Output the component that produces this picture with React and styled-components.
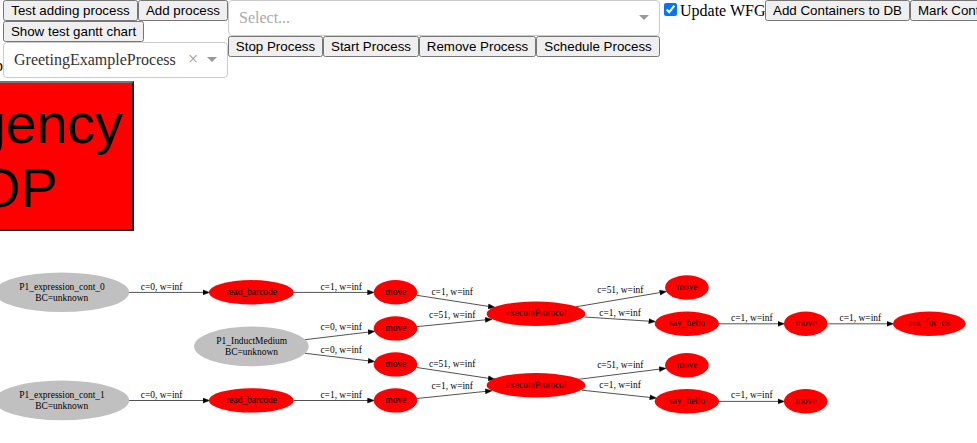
import React from "react";
import styled, { createGlobalStyle } from "styled-components";

const Global = createGlobalStyle`
  body {
    margin: 0;
    background: #fff;
    overflow: hidden;
    font: 16px "Liberation Serif", serif;
    color: #000;
  }
`;

const Page = styled.main`
  width: 977px;
  height: 443px;
  overflow: hidden;
`;

const Toolbar = styled.header`
  display: flex;
  align-items: flex-start;
  height: 81px;
`;

const PromptSlot = styled.div`
  display: flex;
  justify-content: flex-end;
  flex: none;
  width: 3px;
  height: 81px;
  padding-top: 57px;
  box-sizing: border-box;
  overflow: hidden;
  line-height: 18px;
`;

const ProcessColumn = styled.div`
  flex: none;
  width: 225px;
`;

const ScheduleColumn = styled.div`
  flex: none;
  width: 432px;
`;

const ButtonRow = styled.div`
  display: flex;
  flex-wrap: wrap;
`;

const Button = styled.button`
  flex: none;
  width: ${(p) => p.$w}px;
  height: 21px;
  margin: 0;
  padding: 0;
  border: 1px solid #767676;
  border-radius: 2.5px;
  background: #efefef;
  color: #000;
  font: 13.333px "Liberation Sans", Arial, sans-serif;
  line-height: 19px;
  text-align: center;
  white-space: nowrap;
`;

const Select = styled.div`
  display: flex;
  align-items: center;
  box-sizing: border-box;
  height: 36px;
  padding: 0 10px;
  border: 1px solid #ccc;
  border-radius: 4px;
  background: #fff;
`;

const SelectValue = styled.span`
  flex: 1;
  line-height: 34px;
  color: ${(p) => (p.$empty ? "#aaa" : "#333")};
`;

const Clear = styled.span`
  width: 17px;
  margin-right: 5.5px;
  color: #999;
  font-size: 18px;
  line-height: 30px;
  text-align: center;
  transform: translateY(-1px);
`;

const Caret = styled.span`
  margin-top: -1px;
  border: 5px solid transparent;
  border-top-color: #999;
  border-bottom-width: 0;
`;

const UpdateToggle = styled.label`
  display: flex;
  flex: none;
  width: 105px;
  line-height: 20px;
  white-space: nowrap;
`;

const UpdateText = styled.span`
  padding-top: 1px;
`;

const Checkbox = styled.input`
  width: 13px;
  height: 13px;
  margin: 3px 3px 0 4px;
`;

const StopButton = styled.button`
  display: flex;
  justify-content: flex-end;
  box-sizing: border-box;
  width: 134px;
  height: 150px;
  padding: 9px 9px 0 0;
  border: 2px solid;
  border-color: #767676 #212121 #212121 #767676;
  border-left: 0;
  background: #f00;
  color: #000;
  font: 55.5px/64px "Liberation Sans", Arial, sans-serif;
  overflow: hidden;
`;

const StopText = styled.span`
  flex: none;
  text-align: center;
`;

const Graph = styled.svg`
  display: block;
  width: 977px;
  height: 212px;
`;

const GraphText = styled.text`
  font: 9.45px "Liberation Serif", serif;
  text-anchor: middle;
`;

const nodes = [
  [61.7, 292.3, 67.5, 19.8, "P1_expression_cont_0", "BC=unknown"],
  [251.3, 292.3, 42.5, 12.2, "read_barcode"],
  [395.5, 292.3, 21.8, 12.2, "move"],
  [251.4, 346.4, 57.3, 19.8, "P1_InductMedium", "BC=unknown"],
  [395.5, 328.4, 21.8, 12.2, "move"],
  [395.5, 364.4, 21.8, 12.2, "move"],
  [61.7, 400.4, 67.5, 19.8, "P1_expression_cont_1", "BC=unknown"],
  [251.3, 400.4, 42.5, 12.2, "read_barcode"],
  [395.5, 400.4, 21.8, 12.2, "move"],
  [536, 313.7, 49.3, 12.2, "executeProtocol"],
  [536, 385.2, 49.3, 12.2, "executeProtocol"],
  [686.9, 287.5, 21.8, 12.2, "move"],
  [686.9, 323.7, 32.2, 12.2, "say_hello"],
  [805.7, 323.7, 21.8, 12.2, "move"],
  [929.3, 323.7, 36.4, 12.2, "ask_for_ok"],
  [686.9, 365.2, 21.8, 12.2, "move"],
  [686.9, 401.3, 32.2, 12.2, "say_hello"],
  [805.7, 401.3, 21.8, 12.2, "move"],
];

const edges = [
  [129, 292.4, 209.6, 292.4, "c=0, w=inf", 161.6, 290],
  [294, 292.4, 374.2, 292.4, "c=1, w=inf", 341.2, 290],
  [129, 400.5, 209.6, 400.5, "c=0, w=inf", 161.6, 398],
  [294, 400.5, 374.2, 400.5, "c=1, w=inf", 341.2, 398],
  [305, 339.7, 374.8, 331.3, "c=0, w=inf", 341.2, 330],
  [305, 353.3, 374.8, 361.6, "c=0, w=inf", 341.2, 353],
  [416.8, 295.3, 495, 307.4, "c=1, w=inf", 452.2, 295],
  [417, 326.6, 492, 319.2, "c=51, w=inf", 452.2, 318],
  [416.8, 367.5, 495, 379.3, "c=51, w=inf", 452.2, 367],
  [417, 398.5, 492, 390.7, "c=1, w=inf", 452.2, 389],
  [576, 306.8, 666.5, 291.5, "c=51, w=inf", 620.3, 293],
  [584.5, 317, 655.5, 321.6, "c=1, w=inf", 620, 316],
  [578.5, 379.3, 666, 368.3, "c=51, w=inf", 620.3, 368],
  [582, 390.2, 656.5, 398.1, "c=1, w=inf", 620, 388],
  [719, 323.8, 784.5, 323.8, "c=1, w=inf", 751.8, 321],
  [827.5, 323.8, 893.5, 323.8, "c=1, w=inf", 860.4, 321],
  [719, 401.4, 784.5, 401.4, "c=1, w=inf", 751.8, 398],
];

function Node({ data: [x, y, rx, ry, name, code] }) {
  return (
    <g>
      <ellipse cx={x} cy={y} rx={rx} ry={ry} fill={code ? "#c0c0c0" : "#f00"} />
      <GraphText x={x + 0.3} y={code ? y - 2.4 : y + 2.6}>{name}</GraphText>
      {code && <GraphText x={x} y={y + 8.6}>{code}</GraphText>}
    </g>
  );
}

function Edge({ data: [x1, y1, x2, y2, label, lx, ly] }) {
  return (
    <g>
      <line x1={x1} y1={y1} x2={x2 - 3} y2={y2 - ((y2 - y1) * 3) / (x2 - x1)} stroke="#000" strokeWidth="0.68" markerEnd="url(#arrow)" />
      <GraphText x={lx} y={ly}>{label}</GraphText>
    </g>
  );
}

export default function App() {
  return (
    <Page>
      <Global />
      <Toolbar>
        <PromptSlot>p</PromptSlot>
        <ProcessColumn>
          <ButtonRow>
            <Button $w={135}>Test adding process</Button>
            <Button $w={90}>Add process</Button>
            <Button $w={141}>Show test gantt chart</Button>
          </ButtonRow>
          <Select>
            <SelectValue>GreetingExampleProcess</SelectValue>
            <Clear>×</Clear>
            <Caret />
          </Select>
        </ProcessColumn>
        <ScheduleColumn>
          <Select>
            <SelectValue $empty>Select...</SelectValue>
            <Caret />
          </Select>
          <ButtonRow>
            <Button $w={95}>Stop Process</Button>
            <Button $w={96}>Start Process</Button>
            <Button $w={117}>Remove Process</Button>
            <Button $w={124}>Schedule Process</Button>
          </ButtonRow>
        </ScheduleColumn>
        <UpdateToggle>
          <Checkbox type="checkbox" defaultChecked />
          <UpdateText>Update WFG</UpdateText>
        </UpdateToggle>
        <Button $w={145}>Add Containers to DB</Button>
        <Button $w={139}>Mark Containers Full</Button>
      </Toolbar>
      <StopButton>
        <StopText>Emergency<br />STOP</StopText>
      </StopButton>
      <Graph viewBox="0 231 977 212">
        <defs>
          <marker id="arrow" markerUnits="userSpaceOnUse" markerWidth="8" markerHeight="6" refX="4" refY="3" orient="auto">
            <path d="M.4 .6 7 3 .4 5.4Z" stroke="#000" strokeWidth=".5" />
          </marker>
        </defs>
        {edges.map((e, i) => <Edge key={i} data={e} />)}
        {nodes.map((n, i) => <Node key={i} data={n} />)}
      </Graph>
    </Page>
  );
}
